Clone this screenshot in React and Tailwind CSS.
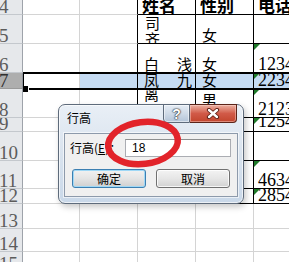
import React from "react";

const cjk = "font-['Noto_Sans_CJK_SC',sans-serif]";
const serif = "font-['Liberation_Serif',serif]";

const rowH = [
  "h-[15px]", "h-[29px]", "h-[29px]", "h-[16px]", "h-[29px]", "h-[14px]",
  "h-[29px]", "h-[28px]", "h-[15px]", "h-[25px]", "h-[23px]", "h-[20px]",
];
const colW = ["w-[23px]", "w-[57px]", "w-[58px]", "w-[58px]", "w-[58px]", "w-[60px]"];

function Tri() {
  return (
    <svg className="absolute left-0 top-0" width="6" height="6" viewBox="0 0 6 6">
      <polygon points="0,0 6,0 0,6" fill="#1f7a2a" />
    </svg>
  );
}

function Num({ children, tri = true, cls = "items-end" }) {
  return (
    <div className={`relative flex h-full ${cls} overflow-hidden pl-[4px]`}>
      {tri && <Tri />}
      <span className={`${serif} text-[18px] leading-[16px] text-black whitespace-nowrap`}>{children}</span>
    </div>
  );
}

function Zh({ children, cls = "items-end pl-[6px]" }) {
  return (
    <div className={`flex h-full ${cls} overflow-hidden ${cjk} text-[15px] leading-[16px] text-black whitespace-nowrap`}>
      {children}
    </div>
  );
}

function Head({ children }) {
  return (
    <div className={`flex h-full items-end overflow-hidden pl-[4px] ${cjk} text-[17px] font-bold leading-[18px] text-black whitespace-nowrap`}>
      {children}
    </div>
  );
}

function content(r, c) {
  const k = `${r}-${c}`;
  switch (k) {
    case "0-3": return <Head>姓名</Head>;
    case "0-4": return <Head>性别</Head>;
    case "0-5": return <Head>电话</Head>;
    case "1-3":
      return (
        <div className={`flex h-full flex-col overflow-hidden pl-[7px] ${cjk} text-[15px] leading-[16px] text-black`}>
          <span>司</span>
          <span>齐</span>
        </div>
      );
    case "1-4": return <Zh>女</Zh>;
    case "2-3": return <Zh cls="items-end justify-between pl-[6px] pr-[3px]"><span>白</span><span>浅</span></Zh>;
    case "2-4": return <Zh>女</Zh>;
    case "2-5": return <Num>1234</Num>;
    case "3-3": return <Zh cls="items-end justify-between pl-[6px] pr-[3px]"><span>凤</span><span>九</span></Zh>;
    case "3-4": return <Zh>女</Zh>;
    case "3-5": return <Num>2234</Num>;
    case "4-3": return <Zh cls="items-start pl-[6px]"><span className="mt-[-3px]">离</span></Zh>;
    case "4-4": return <Zh cls="items-start pl-[6px]"><span className="mt-[3px]">男</span></Zh>;
    case "4-5": return <Num>2123</Num>;
    case "5-5": return <Num cls="items-start"><span className="mt-[-5px] block">1254</span></Num>;
    case "7-5": return <Num>4634</Num>;
    case "8-5": return <Num>2854</Num>;
    default: return null;
  }
}

function cellClass(r, c) {
  if (c === 0) {
    return r === 3
      ? "bg-[#aeaeae] border-r border-b border-r-[#8e939a] border-b-[#9a9a9a]"
      : "bg-[#e6e8eb] border-r border-b border-r-[#9ea3aa] border-b-[#c4c8cd]";
  }
  const sel = r === 3 && c >= 2 ? "bg-[#c5dbf3]" : "bg-white";
  if (r <= 8 && c >= 3) return `${sel} border-r border-b border-black`;
  if (r <= 8 && c === 2) return `${sel} border-r border-b border-r-black border-b-[#d4d4d4]`;
  return `${sel} border-r border-b border-[#d4d4d4]`;
}

function RowHead({ n, sel }) {
  return (
    <div className="flex h-full items-end overflow-hidden">
      <span className={`${serif} ml-[-1px] text-[19px] leading-[15px] ${sel ? "text-[#2f2f2f]" : "text-[#5c5c5c]"}`}>{n}</span>
    </div>
  );
}

function XIcon() {
  return (
    <svg width="14" height="11" viewBox="0 0 14 11">
      <path d="M3 2 L11 9 M11 2 L3 9" stroke="#5a1d12" strokeWidth="4.2" strokeLinecap="round" />
      <path d="M3 2 L11 9 M11 2 L3 9" stroke="#ffffff" strokeWidth="2.4" strokeLinecap="round" />
    </svg>
  );
}

function Dialog() {
  return (
    <div className="absolute left-[58px] top-[104px] h-[100px] w-[186px] rounded-[7px] border border-[#5e6b7b] bg-gradient-to-b from-[#e9eff6] via-[#d9e3ee] to-[#c9d8e9] shadow-[inset_0_0_0_1px_rgba(255,255,255,0.65),2px_3px_6px_rgba(0,0,0,0.22)]">
      <div className="absolute right-[6px] top-[-1px] flex">
        <div className="flex h-[19px] w-[27px] items-center justify-center rounded-bl-[4px] border border-[#5e6b7b] bg-gradient-to-b from-[#e6edf5] via-[#cfdae7] to-[#b3c4d8] shadow-[inset_0_0_0_1px_rgba(255,255,255,0.5)]">
          <span className="font-['Liberation_Sans',sans-serif] text-[14px] font-bold leading-none text-white [text-shadow:0_0_1px_#333,0_0_1px_#333,0_0_2px_#333]">?</span>
        </div>
        <div className="flex h-[19px] w-[47px] items-center justify-center rounded-br-[4px] border border-l-0 border-[#5b2419] bg-gradient-to-b from-[#eab0a2] via-[#d15a48] to-[#c2442c] shadow-[inset_0_0_0_1px_rgba(255,220,210,0.45)]">
          <XIcon />
        </div>
      </div>
      <div className={`h-[28px] pl-[8px] pt-[5px] ${cjk} text-[12px] leading-[16px] text-black`}>行高</div>
      <div className="mx-[5px] h-[64px] border border-[#8d9aab] bg-[#f0f0f0] shadow-[0_0_0_1px_rgba(255,255,255,0.6)]">
        <div className="mt-[5px] flex items-center pl-[5px]">
          <div className={`w-[55px] ${cjk} text-[12px] leading-[16px] text-black whitespace-nowrap`}>
            行高(<span className="underline">E</span>)：
          </div>
          <div className="flex h-[18px] w-[106px] items-center border border-[#abadb3] border-t-[#8e8f8f] bg-white pl-[6px]">
            <span className="font-['Liberation_Sans',sans-serif] text-[12px] leading-none text-black">18</span>
          </div>
        </div>
        <div className="mt-[12px] flex gap-[10px] pl-[7px]">
          <div className={`flex h-[19px] w-[74px] items-center justify-center rounded-[3px] border border-[#3c7fb1] bg-gradient-to-b from-[#f2f2f2] via-[#e4e4e4] to-[#d0d0d0] shadow-[inset_0_0_0_1px_#9fd8f6] ${cjk} text-[12px] leading-none text-black`}>
            确定
          </div>
          <div className={`flex h-[19px] w-[74px] items-center justify-center rounded-[3px] border border-[#707070] bg-gradient-to-b from-[#f3f3f3] via-[#e6e6e6] to-[#d2d2d2] shadow-[inset_0_0_0_1px_rgba(255,255,255,0.8)] ${cjk} text-[12px] leading-none text-black`}>
            取消
          </div>
        </div>
      </div>
    </div>
  );
}

export default function App() {
  const rows = rowH.map((h, r) => r);
  return (
    <div className="relative h-[262px] w-[289px] overflow-hidden bg-white">
      <div className="flex flex-col">
        {rows.map((r) => (
          <div key={r} className={`flex ${rowH[r]}`}>
            {colW.map((w, c) => (
              <div key={c} className={`${w} h-full shrink-0 ${cellClass(r, c)}`}>
                {c === 0 ? <RowHead n={r + 4} sel={r === 3} /> : content(r, c)}
              </div>
            ))}
          </div>
        ))}
      </div>

      {/* selection outline */}
      <div className="absolute left-[23px] top-[72px] h-[18px] w-[280px] border-2 border-l border-black" />
      <div className="absolute left-[23px] top-[86px] h-[6px] w-[6px] border-r border-white bg-black" />

      <Dialog />

      <svg className="pointer-events-none absolute left-0 top-0" width="289" height="262" viewBox="0 0 289 262">
        <ellipse cx="143" cy="143" rx="35" ry="21" transform="rotate(-7 143 143)" fill="none" stroke="#e2232a" strokeWidth="6.5" />
      </svg>
    </div>
  );
}
